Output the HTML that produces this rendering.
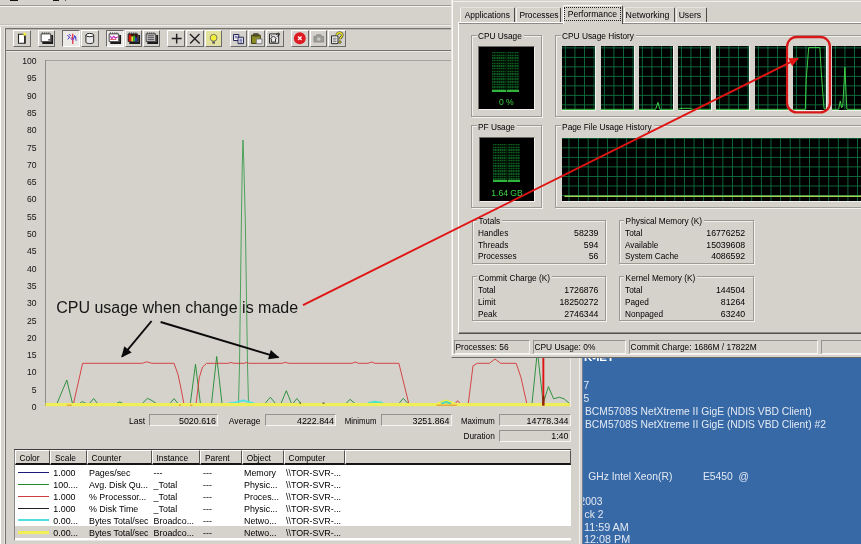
<!DOCTYPE html>
<html><head><meta charset="utf-8"><title>Performance</title>
<style>
html,body{margin:0;padding:0;background:#d5d2cc;}
#root{filter:blur(0.35px);position:relative;width:861px;height:544px;overflow:hidden;background:#d5d2cc;font-family:"Liberation Sans",sans-serif;}
#root div,#root span,#root svg{position:absolute;box-sizing:border-box;}
.t{white-space:pre;}
.btn{border-top:1px solid #fff;border-left:1px solid #fff;border-right:1px solid #6a6a6a;border-bottom:1px solid #6a6a6a;background:#d5d2cc;}
.btnp{border-top:1px solid #6a6a6a;border-left:1px solid #6a6a6a;border-right:1px solid #fff;border-bottom:1px solid #fff;background:#eceae6;}
.sunk{border-top:1px solid #94928c;border-left:1px solid #94928c;border-right:1px solid #f6f5f2;border-bottom:1px solid #f6f5f2;}
.grp{border:1px solid #9c9a94;box-shadow:1px 1px 0 #f4f3f0, inset 1px 1px 0 #f0efeb;}
.hdr{border-top:1px solid #fff;border-left:1px solid #fff;border-right:1px solid #55534f;border-bottom:2px solid #141414;background:#d5d2cc;}
</style></head>
<body><div id="root">
<!-- ===== Performance Monitor window ===== -->
<div style="left:9.8px;top:0px;width:7.8px;height:1.0px;background:#111"></div>
<div style="left:53px;top:0px;width:5.6px;height:1.0px;background:#151515"></div>
<div style="left:64.6px;top:0px;width:1.0px;height:0.9px;background:#555"></div>
<div style="left:0px;top:4.6px;width:452px;height:1px;background:#9c9a94"></div>
<div style="left:0px;top:5.6px;width:452px;height:1px;background:#f4f3f0"></div>
<div style="left:0px;top:24px;width:452px;height:1px;background:#c2bfb8"></div>
<div style="left:0px;top:25px;width:452px;height:1px;background:#efeeea"></div>
<div style="left:0px;top:27px;width:1px;height:517px;background:#fff"></div>
<div style="left:3.5px;top:28px;width:1.3px;height:516px;background:#e6e4de"></div>
<div style="left:5px;top:28px;width:1px;height:516px;background:#74726e"></div>
<div style="left:5px;top:28px;width:447px;height:1px;background:#74726e"></div>
<div style="left:6px;top:29px;width:446px;height:1px;background:#b9b6ae"></div>
<div style="left:6px;top:49.6px;width:446px;height:1px;background:#74726e"></div>
<div style="left:6px;top:50.6px;width:446px;height:1px;background:#e9e7e2"></div>
<div class="btn" style="left:13.2px;top:30.2px;width:17.6px;height:16.6px"><svg viewBox="0 0 16 15" style="left:0;top:0;width:15.6px;height:14.6px"><path d="M4.6 3.4h5.2l1.4 1.2v8H4.6z" fill="#fff" stroke="#222" stroke-width="1.1"/><path d="M11.2 4.4v8.4" stroke="#222" stroke-width="1.5"/><path d="M10.6 0.8l0.8 1.6 1.8-0.4-1.2 1.4 1 1.6-1.8-0.6-1.2 1.2 0-1.8-1.6-0.8 1.8-0.4z" fill="#f6f03a"/></svg></div>
<div class="btn" style="left:37.6px;top:30.2px;width:17.6px;height:16.6px"><svg viewBox="0 0 16 15" style="left:0;top:0;width:15.6px;height:14.6px"><path d="M3.4 12.3H13.5V4.2" fill="none" stroke="#1a1a1a" stroke-width="1.9"/><path d="M2.2 3h9.8v7.9H2.2z" fill="#fff" stroke="#2a2a2a" stroke-width="0.9"/><path d="M3 2.1h8.6" stroke="#222" stroke-width="1" stroke-dasharray="1.1 1.1"/><rect x="9.6" y="8.4" width="1.6" height="1.4" fill="#222"/></svg></div>
<div class="btnp" style="left:62px;top:30.2px;width:17.6px;height:16.6px"><svg viewBox="0 0 16 15" style="left:0;top:0;width:15.6px;height:14.6px"><path d="M4.4 4.4l2.4 1.8-1.8 2.4M6.4 3.2l1.6 2" stroke="#4a2ac8" stroke-width="1" fill="none"/><path d="M10 2.8v10.6" stroke="#e02030" stroke-width="1.2"/><path d="M7.8 7.6l2.2 1.8 2.2-4.4 1.4 5M11.4 4.6l2.4 2.4" stroke="#3a3ad0" stroke-width="1" fill="none"/><path d="M8.4 6l1.6 4" stroke="#d040a0" stroke-width="0.8"/></svg></div>
<div class="btn" style="left:81px;top:30.2px;width:17.6px;height:16.6px"><svg viewBox="0 0 16 15" style="left:0;top:0;width:15.6px;height:14.6px"><path d="M4 4.2v7.2c0 2 8 2 8 0V4.2" fill="#e8e8e8" stroke="#222" stroke-width="1"/><ellipse cx="8" cy="4.2" rx="4" ry="1.7" fill="#fff" stroke="#222" stroke-width="1"/></svg></div>
<div class="btnp" style="left:106.3px;top:30.2px;width:17.6px;height:16.6px"><svg viewBox="0 0 16 15" style="left:0;top:0;width:15.6px;height:14.6px"><path d="M3.4 12.3H13.5V4.2" fill="none" stroke="#1a1a1a" stroke-width="1.9"/><path d="M2.2 3h9.8v7.9H2.2z" fill="#fff" stroke="#2a2a2a" stroke-width="0.9"/><path d="M3 2.1h8.6" stroke="#222" stroke-width="1" stroke-dasharray="1.1 1.1"/><path d="M3.2 5.2l1.8 2.6 1.8-2.4 2 1.8 2.2-1.2" stroke="#c020c0" stroke-width="1.1" fill="none"/><path d="M3.2 8.6h6.4" stroke="#d02020" stroke-width="0.8"/></svg></div>
<div class="btn" style="left:124.5px;top:30.2px;width:17.6px;height:16.6px"><svg viewBox="0 0 16 15" style="left:0;top:0;width:15.6px;height:14.6px"><path d="M3.4 12.3H13.5V4.2" fill="none" stroke="#1a1a1a" stroke-width="1.9"/><path d="M2.2 3h9.8v7.9H2.2z" fill="#3a0808" stroke="#2a2a2a" stroke-width="0.9"/><path d="M3 2.1h8.6" stroke="#222" stroke-width="1" stroke-dasharray="1.1 1.1"/><rect x="2.8" y="3.8" width="2.6" height="6.8" fill="#d01818"/><rect x="5.4" y="5.6" width="2" height="5" fill="#e8e030"/><rect x="7.4" y="4.6" width="2" height="6" fill="#30b030"/><rect x="9.4" y="6.6" width="1.8" height="4" fill="#2040d0"/></svg></div>
<div class="btn" style="left:142.7px;top:30.2px;width:17.6px;height:16.6px"><svg viewBox="0 0 16 15" style="left:0;top:0;width:15.6px;height:14.6px"><path d="M3.4 12.3H13.5V4.2" fill="none" stroke="#1a1a1a" stroke-width="1.9"/><path d="M2.2 3h9.8v7.9H2.2z" fill="#dcdcdc" stroke="#2a2a2a" stroke-width="0.9"/><path d="M3 2.1h8.6" stroke="#222" stroke-width="1" stroke-dasharray="1.1 1.1"/><path d="M3.6 5h7M3.6 7h7M3.6 9h7" stroke="#333" stroke-width="1"/></svg></div>
<div class="btn" style="left:167px;top:30.2px;width:17.6px;height:16.6px"><svg viewBox="0 0 16 15" style="left:0;top:0;width:15.6px;height:14.6px"><path d="M8.9 2.8v10M3.8 7.8h10.2" stroke="#222" stroke-width="1.5"/></svg></div>
<div class="btn" style="left:186px;top:30.2px;width:17.6px;height:16.6px"><svg viewBox="0 0 16 15" style="left:0;top:0;width:15.6px;height:14.6px"><path d="M3 3l10 9.8M12.8 3L3.2 12.8" stroke="#222" stroke-width="1.4"/></svg></div>
<div class="btn" style="left:204.5px;top:30.2px;width:17.6px;height:16.6px"><svg viewBox="0 0 16 15" style="left:0;top:0;width:15.6px;height:14.6px"><rect x="0" y="0" width="16" height="15" fill="#e4e29c"/><circle cx="7.8" cy="7" r="3.5" fill="#f4f03a" stroke="#666" stroke-width="0.9"/><path d="M6.5 10.6h2.6v2.4H6.5z" fill="#555"/></svg></div>
<div class="btn" style="left:229.5px;top:30.2px;width:17.6px;height:16.6px"><svg viewBox="0 0 16 15" style="left:0;top:0;width:15.6px;height:14.6px"><path d="M2.6 3.6h5.4v6.2H2.6z" fill="#fff" stroke="#1e1e50" stroke-width="1"/><path d="M7.2 6.4h5.6v6.6H7.2z" fill="#fff" stroke="#1e1e50" stroke-width="1"/><path d="M3.8 5.4h3M3.8 7h3M8.6 8.4h3M8.6 10h3M8.6 11.4h3" stroke="#30307a" stroke-width="0.8"/></svg></div>
<div class="btn" style="left:247.8px;top:30.2px;width:17.6px;height:16.6px"><svg viewBox="0 0 16 15" style="left:0;top:0;width:15.6px;height:14.6px"><path d="M2.6 4.2h9v8.6h-9z" fill="#8c8c24" stroke="#3c3c12" stroke-width="1"/><rect x="4.8" y="2.8" width="4.6" height="2.4" fill="#55551a" stroke="#333" stroke-width="0.7"/><path d="M7.6 8.2h5.8v5H7.6z" fill="#ececec" stroke="#777" stroke-width="0.9"/></svg></div>
<div class="btn" style="left:266px;top:30.2px;width:17.6px;height:16.6px"><svg viewBox="0 0 16 15" style="left:0;top:0;width:15.6px;height:14.6px"><path d="M2.6 3h9.4v9.6H2.6z" fill="#e8e8e8" stroke="#222" stroke-width="1"/><path d="M3.6 8l3-3 3 3M4.4 8v3.4h4.4V8M4 5h1M9 4l3-2 1 1.6-3 2.2" stroke="#222" stroke-width="1" fill="none"/></svg></div>
<div class="btn" style="left:291px;top:30.2px;width:17.6px;height:16.6px"><svg viewBox="0 0 16 15" style="left:0;top:0;width:15.6px;height:14.6px"><circle cx="8" cy="7.5" r="6.1" fill="#de1a22"/><path d="M6.2 5.6l3.6 3.6M9.8 5.6L6.2 9.2" stroke="#fff" stroke-width="1.3"/></svg></div>
<div class="btn" style="left:309.5px;top:30.2px;width:17.6px;height:16.6px"><svg viewBox="0 0 16 15" style="left:0;top:0;width:15.6px;height:14.6px"><path d="M3 5.4h2l1-1.6h4l1 1.6h2v6H3z" fill="#9a9a96" stroke="#8a8884" stroke-width="0.8"/><circle cx="8" cy="8.2" r="1.9" fill="#c8c6c0"/></svg></div>
<div class="btn" style="left:328px;top:30.2px;width:17.6px;height:16.6px"><svg viewBox="0 0 16 15" style="left:0;top:0;width:15.6px;height:14.6px"><path d="M2.6 5h6.6v8H2.6z" fill="#fff" stroke="#222" stroke-width="1"/><path d="M3.8 7.4h4M3.8 9.2h4M3.8 11h4" stroke="#444" stroke-width="0.8"/><path d="M8 4.4c0-3.4 5.6-3.4 5.6 0 0 2-2.4 2-2.4 4.2" fill="none" stroke="#222" stroke-width="2.6"/><path d="M8 4.4c0-3.4 5.6-3.4 5.6 0 0 2-2.4 2-2.4 4.2" fill="none" stroke="#f0ea30" stroke-width="1.4"/><circle cx="11.2" cy="11.4" r="1.3" fill="#f0ea30" stroke="#222" stroke-width="0.7"/></svg></div>
<span class="t" style="top:55px;font-size:8.6px;line-height:12px;color:#111;right:824.4px;">100</span>
<span class="t" style="top:72px;font-size:8.6px;line-height:12px;color:#111;right:824.4px;">95</span>
<span class="t" style="top:90px;font-size:8.6px;line-height:12px;color:#111;right:824.4px;">90</span>
<span class="t" style="top:107px;font-size:8.6px;line-height:12px;color:#111;right:824.4px;">85</span>
<span class="t" style="top:124px;font-size:8.6px;line-height:12px;color:#111;right:824.4px;">80</span>
<span class="t" style="top:142px;font-size:8.6px;line-height:12px;color:#111;right:824.4px;">75</span>
<span class="t" style="top:159px;font-size:8.6px;line-height:12px;color:#111;right:824.4px;">70</span>
<span class="t" style="top:176px;font-size:8.6px;line-height:12px;color:#111;right:824.4px;">65</span>
<span class="t" style="top:193px;font-size:8.6px;line-height:12px;color:#111;right:824.4px;">60</span>
<span class="t" style="top:211px;font-size:8.6px;line-height:12px;color:#111;right:824.4px;">55</span>
<span class="t" style="top:228px;font-size:8.6px;line-height:12px;color:#111;right:824.4px;">50</span>
<span class="t" style="top:245px;font-size:8.6px;line-height:12px;color:#111;right:824.4px;">45</span>
<span class="t" style="top:263px;font-size:8.6px;line-height:12px;color:#111;right:824.4px;">40</span>
<span class="t" style="top:280px;font-size:8.6px;line-height:12px;color:#111;right:824.4px;">35</span>
<span class="t" style="top:297px;font-size:8.6px;line-height:12px;color:#111;right:824.4px;">30</span>
<span class="t" style="top:315px;font-size:8.6px;line-height:12px;color:#111;right:824.4px;">25</span>
<span class="t" style="top:332px;font-size:8.6px;line-height:12px;color:#111;right:824.4px;">20</span>
<span class="t" style="top:349px;font-size:8.6px;line-height:12px;color:#111;right:824.4px;">15</span>
<span class="t" style="top:366px;font-size:8.6px;line-height:12px;color:#111;right:824.4px;">10</span>
<span class="t" style="top:384px;font-size:8.6px;line-height:12px;color:#111;right:824.4px;">5</span>
<span class="t" style="top:401px;font-size:8.6px;line-height:12px;color:#111;right:824.4px;">0</span>
<div style="left:45px;top:60px;width:525px;height:1px;background:#a4a29c"></div>
<div style="left:45px;top:60px;width:1px;height:346px;background:#8e8c86"></div>
<div style="left:570px;top:60px;width:1px;height:347px;background:#ecebe7"></div>
<svg width="861" height="544" viewBox="0 0 861 544" style="left:0;top:0"><polyline points="57,403.5 66.8,380 72.5,403.5 79.5,403.5 82.6,401.6 86,403.5 89.5,403.5 93.7,398.5 97.5,403.5 116.5,403.5 119.7,402 123,403.5 142.4,403.5 147.3,398.3 151,400 156.3,403.5 170,403.5 174,398.6 178,403.5 190.3,403.5 195.5,364.3 200.4,403.5 211.5,403.5 216.7,356.5 222,403.5 265,403.5 270.3,397.2 275.5,403.5 281,403.5 286.3,390.7 291.5,403.5 293,403.5 296.8,398.5 301,403.5 346,403.5 350,399.3 355,403.5 399,403.5 403.3,398.3 408,403.5 532,403.5 537.4,351 543.2,403.5 548.4,386.6 553.6,398.8 559.3,397.2 564,398.8 569.5,403.5" fill="none" stroke="#1f8a30" stroke-width="0.9" stroke-linejoin="round" /><polyline points="238.5,403.5 239.5,365 241.4,220 242.3,163 243,140 243.8,163 245.3,220 247.5,365 248.5,403.5" fill="none" stroke="#2c9440" stroke-width="0.8" stroke-linejoin="round" /><polyline points="45.5,404.5 73.3,404.5 82.6,363.3 142.4,363.3 146.5,361.8 152,363.3 174,363.3 178,374.4 181.4,390.6 184,404.5 196,404.5 199.3,377.6 202.5,367 206.6,363.3 228,363.3 231,362.5 234,363.3 244,363.3 246.4,362.5 249,363.3 282,363.3 285.4,362.3 289,363.3 352,363.3 355.3,362 358.5,363.3 368,363.3 371.5,362 375,363.3 398.9,363.3 409,404.5 454.4,404.5 457.6,400.7 461,404.5 468.2,404.5 473,365.8 477.2,363.3 489.3,363.3 495,359 500.7,363.3 516.2,363.3 521,377.6 527,404.5 569.5,404.5" fill="none" stroke="#d43434" stroke-width="0.9" stroke-linejoin="round" /><polyline points="228.5,403.5 236,402.3 243,400.4 250,402.3 254.5,403.5" fill="none" stroke="#4fe3df" stroke-width="1.8" stroke-linejoin="round" /><polyline points="368.3,403 375,401.8 383,403" fill="none" stroke="#52e0c8" stroke-width="2" stroke-linejoin="round" /><polyline points="440,403 446.3,401 452,403" fill="none" stroke="#52d8c0" stroke-width="2.4" stroke-linejoin="round" /><rect x="45.5" y="403" width="524.3" height="3.2" fill="#efee58"/><polyline points="437,403.5 446.3,400.2 455,403.5" fill="none" stroke="#f1ef4c" stroke-width="1.6" stroke-linejoin="round" /><polyline points="441,403.6 446.3,402 451,403.6" fill="none" stroke="#58d6b8" stroke-width="2" stroke-linejoin="round" /><rect x="66.8" y="404.6" width="4.900000000000006" height="1.2" fill="#e89a38"/><rect x="436.6" y="404.6" width="20.19999999999999" height="1.2" fill="#e89a38"/><rect x="179" y="404.6" width="2" height="1.2" fill="#e89a38"/><rect x="190" y="404.6" width="2.4000000000000057" height="1.2" fill="#e89a38"/><rect x="322.5" y="402.6" width="2" height="1" fill="#333"/><rect x="299.5" y="402.6" width="1.5" height="1" fill="#333"/><rect x="542.4" y="340" width="1.9" height="65.5" fill="#dc1414"/><rect x="542.2" y="396" width="2.2" height="9.5" fill="#8c2808"/></svg>
<span class="t" style="top:415px;font-size:8.5px;line-height:12px;color:#000;right:716px;">Last</span>
<div class="sunk" style="left:149px;top:414.1px;width:69px;height:12.100000000000012px;"></div>
<span class="t" style="top:415px;font-size:8.9px;line-height:12px;color:#000;right:645.0px;">5020.616</span>
<span class="t" style="top:415px;font-size:8.55px;line-height:12px;color:#000;right:600.5px;">Average</span>
<div class="sunk" style="left:265px;top:414.1px;width:71px;height:12.100000000000012px;"></div>
<span class="t" style="top:415px;font-size:8.9px;line-height:12px;color:#000;right:527.0px;">4222.844</span>
<span class="t" style="top:415px;font-size:8.5px;line-height:12px;color:#000;transform:scaleX(0.92);transform-origin:100% 50%;right:485px;">Minimum</span>
<div class="sunk" style="left:380.5px;top:414.1px;width:71.0px;height:12.100000000000012px;"></div>
<span class="t" style="top:415px;font-size:8.9px;line-height:12px;color:#000;right:411.5px;">3251.864</span>
<span class="t" style="top:415px;font-size:8.5px;line-height:12px;color:#000;transform:scaleX(0.92);transform-origin:100% 50%;right:366.2px;">Maximum</span>
<div class="sunk" style="left:499px;top:414.1px;width:71.5px;height:12.100000000000012px;"></div>
<span class="t" style="top:415px;font-size:8.9px;line-height:12px;color:#000;right:292.5px;">14778.344</span>
<span class="t" style="top:430px;font-size:8.3px;line-height:12px;color:#000;right:366.2px;">Duration</span>
<div class="sunk" style="left:499px;top:429.6px;width:71.5px;height:12.100000000000012px;"></div>
<span class="t" style="top:430px;font-size:8.9px;line-height:12px;color:#000;right:292.5px;">1:40</span>
<div style="left:14px;top:449px;width:557px;height:92px;background:#fff;border-left:1px solid #8a8882;border-bottom:1px solid #e8e6e1"></div>
<div style="left:14px;top:448.8px;width:557.2px;height:1.3px;background:#403e3c"></div>
<div class="hdr" style="left:14.5px;top:449.8px;width:35.5px;height:15px;"></div>
<span class="t" style="top:452px;font-size:8.4px;line-height:12px;color:#000;left:19.5px;">Color</span>
<div class="hdr" style="left:50px;top:449.8px;width:36.5px;height:15px;"></div>
<span class="t" style="top:452px;font-size:8.4px;line-height:12px;color:#000;left:55px;">Scale</span>
<div class="hdr" style="left:86.5px;top:449.8px;width:65.0px;height:15px;"></div>
<span class="t" style="top:452px;font-size:8.4px;line-height:12px;color:#000;left:91.5px;">Counter</span>
<div class="hdr" style="left:151.5px;top:449.8px;width:48.5px;height:15px;"></div>
<span class="t" style="top:452px;font-size:8.4px;line-height:12px;color:#000;left:156.5px;">Instance</span>
<div class="hdr" style="left:200px;top:449.8px;width:41.69999999999999px;height:15px;"></div>
<span class="t" style="top:452px;font-size:8.4px;line-height:12px;color:#000;left:205px;">Parent</span>
<div class="hdr" style="left:241.7px;top:449.8px;width:41.900000000000034px;height:15px;"></div>
<span class="t" style="top:452px;font-size:8.4px;line-height:12px;color:#000;left:246.7px;">Object</span>
<div class="hdr" style="left:283.6px;top:449.8px;width:61.0px;height:15px;"></div>
<span class="t" style="top:452px;font-size:8.4px;line-height:12px;color:#000;left:288.6px;">Computer</span>
<div class="hdr" style="left:344.6px;top:449.8px;width:226.19999999999993px;height:15px;"></div>
<div style="left:15px;top:526.2px;width:555.5px;height:12px;background:#d6d3cd"></div>
<div style="left:18.2px;top:472.09999999999997px;width:31.3px;height:0.9px;background:#1c1c78"></div>
<span class="t" style="top:467px;font-size:8.9px;line-height:12px;color:#000;left:53.3px;">1.000</span>
<span class="t" style="top:467px;font-size:8.9px;line-height:12px;color:#000;left:89px;">Pages/sec</span>
<span class="t" style="top:467px;font-size:8.9px;line-height:12px;color:#000;left:153.6px;">---</span>
<span class="t" style="top:467px;font-size:8.9px;line-height:12px;color:#000;left:203px;">---</span>
<span class="t" style="top:467px;font-size:8.9px;line-height:12px;color:#000;left:244px;">Memory</span>
<span class="t" style="top:467px;font-size:8.9px;line-height:12px;color:#000;left:286px;">\\TOR-SVR-...</span>
<div style="left:18.2px;top:484.02px;width:31.3px;height:0.9px;background:#23892f"></div>
<span class="t" style="top:479px;font-size:8.9px;line-height:12px;color:#000;left:53.3px;">100....</span>
<span class="t" style="top:479px;font-size:8.9px;line-height:12px;color:#000;left:89px;">Avg. Disk Qu...</span>
<span class="t" style="top:479px;font-size:8.9px;line-height:12px;color:#000;left:153.6px;">_Total</span>
<span class="t" style="top:479px;font-size:8.9px;line-height:12px;color:#000;left:203px;">---</span>
<span class="t" style="top:479px;font-size:8.9px;line-height:12px;color:#000;left:244px;">Physic...</span>
<span class="t" style="top:479px;font-size:8.9px;line-height:12px;color:#000;left:286px;">\\TOR-SVR-...</span>
<div style="left:18.2px;top:495.93999999999994px;width:31.3px;height:0.9px;background:#cf3d3d"></div>
<span class="t" style="top:491px;font-size:8.9px;line-height:12px;color:#000;left:53.3px;">1.000</span>
<span class="t" style="top:491px;font-size:8.9px;line-height:12px;color:#000;left:89px;">% Processor...</span>
<span class="t" style="top:491px;font-size:8.9px;line-height:12px;color:#000;left:153.6px;">_Total</span>
<span class="t" style="top:491px;font-size:8.9px;line-height:12px;color:#000;left:203px;">---</span>
<span class="t" style="top:491px;font-size:8.9px;line-height:12px;color:#000;left:244px;">Proces...</span>
<span class="t" style="top:491px;font-size:8.9px;line-height:12px;color:#000;left:286px;">\\TOR-SVR-...</span>
<div style="left:18.2px;top:507.85999999999996px;width:31.3px;height:0.9px;background:#222"></div>
<span class="t" style="top:503px;font-size:8.9px;line-height:12px;color:#000;left:53.3px;">1.000</span>
<span class="t" style="top:503px;font-size:8.9px;line-height:12px;color:#000;left:89px;">% Disk Time</span>
<span class="t" style="top:503px;font-size:8.9px;line-height:12px;color:#000;left:153.6px;">_Total</span>
<span class="t" style="top:503px;font-size:8.9px;line-height:12px;color:#000;left:203px;">---</span>
<span class="t" style="top:503px;font-size:8.9px;line-height:12px;color:#000;left:244px;">Physic...</span>
<span class="t" style="top:503px;font-size:8.9px;line-height:12px;color:#000;left:286px;">\\TOR-SVR-...</span>
<div style="left:18.2px;top:519.0799999999999px;width:31.3px;height:2.4px;background:#4fdfe0"></div>
<span class="t" style="top:515px;font-size:8.9px;line-height:12px;color:#000;left:53.3px;">0.00...</span>
<span class="t" style="top:515px;font-size:8.9px;line-height:12px;color:#000;left:89px;">Bytes Total/sec</span>
<span class="t" style="top:515px;font-size:8.9px;line-height:12px;color:#000;left:153.6px;">Broadco...</span>
<span class="t" style="top:515px;font-size:8.9px;line-height:12px;color:#000;left:203px;">---</span>
<span class="t" style="top:515px;font-size:8.9px;line-height:12px;color:#000;left:244px;">Netwo...</span>
<span class="t" style="top:515px;font-size:8.9px;line-height:12px;color:#000;left:286px;">\\TOR-SVR-...</span>
<div style="left:18.2px;top:530.7px;width:31.3px;height:3px;background:#f1ef55"></div>
<span class="t" style="top:527px;font-size:8.9px;line-height:12px;color:#000;left:53.3px;">0.00...</span>
<span class="t" style="top:527px;font-size:8.9px;line-height:12px;color:#000;left:89px;">Bytes Total/sec</span>
<span class="t" style="top:527px;font-size:8.9px;line-height:12px;color:#000;left:153.6px;">Broadco...</span>
<span class="t" style="top:527px;font-size:8.9px;line-height:12px;color:#000;left:203px;">---</span>
<span class="t" style="top:527px;font-size:8.9px;line-height:12px;color:#000;left:244px;">Netwo...</span>
<span class="t" style="top:527px;font-size:8.9px;line-height:12px;color:#000;left:286px;">\\TOR-SVR-...</span>
<div style="left:578.8px;top:356px;width:1.2px;height:188px;background:#f1f0ec"></div>
<div style="left:581.6px;top:356px;width:1px;height:188px;background:#6f7f98"></div>
<!-- ===== Desktop (BgInfo) ===== -->
<div style="left:582.5px;top:356px;width:279px;height:188px;background:#3869a7;overflow:hidden">
<span class="t" style="left:1.5px;top:-6px;font-size:11.5px;line-height:14px;color:#fff;font-weight:bold;">K-IET</span>
<span class="t" style="left:1.1px;top:23px;font-size:10.3px;line-height:13px;color:#e3eaf3;">7</span>
<span class="t" style="left:1.1px;top:36px;font-size:10.3px;line-height:13px;color:#e3eaf3;">5</span>
<span class="t" style="left:2.5px;top:49px;font-size:10.3px;line-height:13px;color:#e3eaf3;">BCM5708S NetXtreme II GigE (NDIS VBD Client)</span>
<span class="t" style="left:2.5px;top:62px;font-size:10.3px;line-height:13px;color:#e3eaf3;">BCM5708S NetXtreme II GigE (NDIS VBD Client) #2</span>
<span class="t" style="left:-1.9px;top:114px;font-size:10.3px;line-height:13px;color:#e3eaf3;">l</span>
<span class="t" style="left:5.7px;top:114px;font-size:10.3px;line-height:13px;color:#e3eaf3;">GHz Intel Xeon(R)</span>
<span class="t" style="left:120.4px;top:114px;font-size:10.3px;line-height:13px;color:#e3eaf3;">E5450  @</span>
<span class="t" style="left:-2.9px;top:139px;font-size:10.3px;line-height:13px;color:#e3eaf3;">2003</span>
<span class="t" style="left:2.1px;top:152px;font-size:10.3px;line-height:13px;color:#e3eaf3;">ck 2</span>
<span class="t" style="left:1.5px;top:164px;font-size:10.8px;line-height:14px;color:#e3eaf3;">11:59 AM</span>
<span class="t" style="left:1.5px;top:176px;font-size:10.8px;line-height:14px;color:#e3eaf3;">12:08 PM</span>
</div>
<!-- ===== Task Manager window ===== -->
<div style="left:451px;top:0px;width:410px;height:357.5px;background:#d5d2cc;border-left:1px solid #e6e4de;border-bottom:1.7px solid #6a6864"></div>
<div style="left:451.8px;top:0px;width:1.2px;height:355.4px;background:#fbfaf8"></div>
<div style="left:453px;top:354.4px;width:408px;height:1px;background:#f1f0ec"></div>
<div style="left:453px;top:1.2px;width:408px;height:1px;background:#efeeea"></div>
<div style="left:458px;top:22px;width:420px;height:312.4px;border-left:1px solid #fff;border-top:1px solid #fff;border-bottom:1px solid #55534f;box-shadow:0 1px 0 #8d8b86 inset"></div>
<div style="left:459px;top:332.4px;width:402px;height:1px;background:#8d8b86"></div>
<div style="left:460.3px;top:7.2px;width:54.30000000000001px;height:15px;background:#d5d2cc;border-left:1px solid #f3f2ef;border-top:1px solid #e6e4df;border-right:1px solid #4c4a46;border-radius:2px 2px 0 0"></div>
<span class="t" style="top:9px;font-size:8.4px;line-height:12px;color:#000;left:387.25000000000006px;width:200px;text-align:center;">Applications</span>
<div style="left:516px;top:7.2px;width:45.39999999999998px;height:15px;background:#d5d2cc;border-left:1px solid #f3f2ef;border-top:1px solid #e6e4df;border-right:1px solid #4c4a46;border-radius:2px 2px 0 0"></div>
<span class="t" style="top:9px;font-size:8.4px;line-height:12px;color:#000;left:439.0px;width:200px;text-align:center;">Processes</span>
<div style="left:562.6px;top:4.8px;width:60.39999999999998px;height:19px;background:#d5d2cc;border-left:1px solid #fff;border-top:1px solid #fbfaf8;border-right:1px solid #4c4a46;border-radius:2px 2px 0 0"></div>
<div style="left:564.4px;top:7.4px;width:56.59999999999998px;height:13.8px;border:1px dotted #222"></div>
<span class="t" style="top:8px;font-size:8.65px;line-height:12px;color:#000;left:492.4px;width:200px;text-align:center;">Performance</span>
<div style="left:624px;top:7.2px;width:50.60000000000002px;height:15px;background:#d5d2cc;border-left:1px solid #f3f2ef;border-top:1px solid #e6e4df;border-right:1px solid #4c4a46;border-radius:2px 2px 0 0"></div>
<span class="t" style="top:9px;font-size:8.75px;line-height:12px;color:#000;left:547.4999999999999px;width:200px;text-align:center;">Networking</span>
<div style="left:676px;top:7.2px;width:31.399999999999977px;height:15px;background:#d5d2cc;border-left:1px solid #f3f2ef;border-top:1px solid #e6e4df;border-right:1px solid #4c4a46;border-radius:2px 2px 0 0"></div>
<span class="t" style="top:9px;font-size:8.6px;line-height:12px;color:#000;left:589.9px;width:200px;text-align:center;">Users</span>
<div class="grp" style="left:470.9px;top:34.5px;width:71.10000000000002px;height:82.2px;"></div>
<span class="t" style="top:30px;font-size:8.3px;line-height:12px;color:#000;background:#d5d2cc;padding:0 2px 0 1.5px;left:476.5px;">CPU Usage</span>
<div class="grp" style="left:555px;top:34.5px;width:325px;height:82.2px;"></div>
<span class="t" style="top:30px;font-size:8.3px;line-height:12px;color:#000;background:#d5d2cc;padding:0 2px 0 1.5px;left:560.6px;">CPU Usage History</span>
<div class="grp" style="left:470.9px;top:125.1px;width:71.10000000000002px;height:82.6px;"></div>
<span class="t" style="top:121px;font-size:8.3px;line-height:12px;color:#000;background:#d5d2cc;padding:0 2px 0 1.5px;left:476.5px;">PF Usage</span>
<div class="grp" style="left:555px;top:125.1px;width:325px;height:82.6px;"></div>
<span class="t" style="top:121px;font-size:8.3px;line-height:12px;color:#000;background:#d5d2cc;padding:0 2px 0 1.5px;left:560.6px;">Page File Usage History</span>
<div class="grp" style="left:471.5px;top:219.7px;width:134.5px;height:43.900000000000034px;"></div>
<span class="t" style="top:215px;font-size:8.3px;line-height:12px;color:#000;background:#d5d2cc;padding:0 2px 0 1.5px;left:477.1px;">Totals</span>
<div class="grp" style="left:618.5px;top:219.7px;width:135.0px;height:43.900000000000034px;"></div>
<span class="t" style="top:215px;font-size:8.3px;line-height:12px;color:#000;background:#d5d2cc;padding:0 2px 0 1.5px;left:624.1px;">Physical Memory (K)</span>
<div class="grp" style="left:471.5px;top:276.4px;width:134.5px;height:44.200000000000045px;"></div>
<span class="t" style="top:272px;font-size:8.3px;line-height:12px;color:#000;background:#d5d2cc;padding:0 2px 0 1.5px;left:477.1px;">Commit Charge (K)</span>
<div class="grp" style="left:618.5px;top:276.4px;width:135.0px;height:44.200000000000045px;"></div>
<span class="t" style="top:272px;font-size:8.3px;line-height:12px;color:#000;background:#d5d2cc;padding:0 2px 0 1.5px;left:624.1px;">Kernel Memory (K)</span>
<span class="t" style="top:228px;font-size:8.25px;line-height:11px;color:#000;left:478px;">Handles</span>
<span class="t" style="top:227px;font-size:8.75px;line-height:12px;color:#000;right:262.6px;">58239</span>
<span class="t" style="top:240px;font-size:8.25px;line-height:11px;color:#000;left:478px;">Threads</span>
<span class="t" style="top:239px;font-size:8.75px;line-height:12px;color:#000;right:262.6px;">594</span>
<span class="t" style="top:251px;font-size:8.25px;line-height:11px;color:#000;left:478px;">Processes</span>
<span class="t" style="top:250px;font-size:8.75px;line-height:12px;color:#000;right:262.6px;">56</span>
<span class="t" style="top:228px;font-size:8.25px;line-height:11px;color:#000;left:625px;">Total</span>
<span class="t" style="top:227px;font-size:8.75px;line-height:12px;color:#000;right:115.79999999999995px;">16776252</span>
<span class="t" style="top:240px;font-size:8.25px;line-height:11px;color:#000;left:625px;">Available</span>
<span class="t" style="top:239px;font-size:8.75px;line-height:12px;color:#000;right:115.79999999999995px;">15039608</span>
<span class="t" style="top:251px;font-size:8.25px;line-height:11px;color:#000;left:625px;">System Cache</span>
<span class="t" style="top:250px;font-size:8.75px;line-height:12px;color:#000;right:115.79999999999995px;">4086592</span>
<span class="t" style="top:285px;font-size:8.25px;line-height:11px;color:#000;left:478px;">Total</span>
<span class="t" style="top:284px;font-size:8.75px;line-height:12px;color:#000;right:262.6px;">1726876</span>
<span class="t" style="top:297px;font-size:8.25px;line-height:11px;color:#000;left:478px;">Limit</span>
<span class="t" style="top:296px;font-size:8.75px;line-height:12px;color:#000;right:262.6px;">18250272</span>
<span class="t" style="top:309px;font-size:8.25px;line-height:11px;color:#000;left:478px;">Peak</span>
<span class="t" style="top:308px;font-size:8.75px;line-height:12px;color:#000;right:262.6px;">2746344</span>
<span class="t" style="top:285px;font-size:8.25px;line-height:11px;color:#000;left:625px;">Total</span>
<span class="t" style="top:284px;font-size:8.75px;line-height:12px;color:#000;right:115.79999999999995px;">144504</span>
<span class="t" style="top:297px;font-size:8.25px;line-height:11px;color:#000;left:625px;">Paged</span>
<span class="t" style="top:296px;font-size:8.75px;line-height:12px;color:#000;right:115.79999999999995px;">81264</span>
<span class="t" style="top:309px;font-size:8.25px;line-height:11px;color:#000;left:625px;">Nonpaged</span>
<span class="t" style="top:308px;font-size:8.75px;line-height:12px;color:#000;right:115.79999999999995px;">63240</span>
<div style="left:478px;top:45.6px;width:56.60000000000002px;height:64.6px;background:#000;border-right:1px solid #f4f3f0;border-bottom:1px solid #f4f3f0;border-top:1px solid #6e6c68;border-left:1px solid #6e6c68"></div>
<div style="left:492.2px;top:52.0px;width:27.3px;height:39.7px;background:repeating-linear-gradient(to right,rgba(0,0,0,0) 0,rgba(0,0,0,0) 0.9px,rgba(0,0,0,0.4) 0.9px,rgba(0,0,0,0.4) 1.8px),repeating-linear-gradient(to bottom,#0d5a20 0,#0d5a20 1.5px,#021a07 1.5px,#021a07 2.65px)"></div>
<div style="left:505.95px;top:52.0px;width:0.7px;height:41.1px;background:#031c08"></div>
<div style="left:492.2px;top:90.4px;width:27.3px;height:1.3px;background:#31b43c"></div>
<div style="left:505.8px;top:90.4px;width:1px;height:1.3px;background:#0a3a10"></div>
<span class="t" style="top:96px;font-size:8.6px;line-height:12px;color:#3fd445;left:406.3px;width:200px;text-align:center;">0 %</span>
<div style="left:479px;top:137.4px;width:56px;height:64.19999999999999px;background:#000;border-right:1px solid #f4f3f0;border-bottom:1px solid #f4f3f0;border-top:1px solid #6e6c68;border-left:1px solid #6e6c68"></div>
<div style="left:492.9px;top:143.8px;width:27.3px;height:37.79999999999998px;background:repeating-linear-gradient(to right,rgba(0,0,0,0) 0,rgba(0,0,0,0) 0.9px,rgba(0,0,0,0.4) 0.9px,rgba(0,0,0,0.4) 1.8px),repeating-linear-gradient(to bottom,#0d5a20 0,#0d5a20 1.5px,#021a07 1.5px,#021a07 2.65px)"></div>
<div style="left:506.65px;top:143.8px;width:0.7px;height:39.19999999999998px;background:#031c08"></div>
<div style="left:492.9px;top:180.0px;width:27.3px;height:1.6px;background:#31b43c"></div>
<div style="left:506.5px;top:180.0px;width:1px;height:1.6px;background:#0a3a10"></div>
<span class="t" style="top:187px;font-size:8.6px;line-height:12px;color:#3fd445;left:407.0px;width:200px;text-align:center;">1.64 GB</span>
<div style="left:562.2px;top:46px;width:34.3px;height:65.4px;background:#000;border-right:1px solid #f1f0ec;border-bottom:1px solid #f1f0ec;overflow:hidden"><svg width="34.3" height="64.4" style="left:0;top:0"><rect x="2.90" y="0" width="0.9" height="64.4" fill="#0f7040"/><rect x="12.47" y="0" width="0.9" height="64.4" fill="#0f7040"/><rect x="22.04" y="0" width="0.9" height="64.4" fill="#0f7040"/><rect x="31.61" y="0" width="0.9" height="64.4" fill="#0f7040"/><rect x="0" y="1.40" width="34.3" height="0.9" fill="#0f7040"/><rect x="0" y="10.90" width="34.3" height="0.9" fill="#0f7040"/><rect x="0" y="20.40" width="34.3" height="0.9" fill="#0f7040"/><rect x="0" y="29.90" width="34.3" height="0.9" fill="#0f7040"/><rect x="0" y="39.40" width="34.3" height="0.9" fill="#0f7040"/><rect x="0" y="48.90" width="34.3" height="0.9" fill="#0f7040"/><rect x="0" y="58.40" width="34.3" height="0.9" fill="#0f7040"/><polyline points="0,63.3 34.3,63.3" fill="none" stroke="#40d84a" stroke-width="0.95"/></svg></div>
<div style="left:600.8px;top:46px;width:34.3px;height:65.4px;background:#000;border-right:1px solid #f1f0ec;border-bottom:1px solid #f1f0ec;overflow:hidden"><svg width="34.3" height="64.4" style="left:0;top:0"><rect x="2.90" y="0" width="0.9" height="64.4" fill="#0f7040"/><rect x="12.47" y="0" width="0.9" height="64.4" fill="#0f7040"/><rect x="22.04" y="0" width="0.9" height="64.4" fill="#0f7040"/><rect x="31.61" y="0" width="0.9" height="64.4" fill="#0f7040"/><rect x="0" y="1.40" width="34.3" height="0.9" fill="#0f7040"/><rect x="0" y="10.90" width="34.3" height="0.9" fill="#0f7040"/><rect x="0" y="20.40" width="34.3" height="0.9" fill="#0f7040"/><rect x="0" y="29.90" width="34.3" height="0.9" fill="#0f7040"/><rect x="0" y="39.40" width="34.3" height="0.9" fill="#0f7040"/><rect x="0" y="48.90" width="34.3" height="0.9" fill="#0f7040"/><rect x="0" y="58.40" width="34.3" height="0.9" fill="#0f7040"/><polyline points="0,63.3 34.3,63.3" fill="none" stroke="#40d84a" stroke-width="0.95"/></svg></div>
<div style="left:639.3px;top:46px;width:34.3px;height:65.4px;background:#000;border-right:1px solid #f1f0ec;border-bottom:1px solid #f1f0ec;overflow:hidden"><svg width="34.3" height="64.4" style="left:0;top:0"><rect x="2.90" y="0" width="0.9" height="64.4" fill="#0f7040"/><rect x="12.47" y="0" width="0.9" height="64.4" fill="#0f7040"/><rect x="22.04" y="0" width="0.9" height="64.4" fill="#0f7040"/><rect x="31.61" y="0" width="0.9" height="64.4" fill="#0f7040"/><rect x="0" y="1.40" width="34.3" height="0.9" fill="#0f7040"/><rect x="0" y="10.90" width="34.3" height="0.9" fill="#0f7040"/><rect x="0" y="20.40" width="34.3" height="0.9" fill="#0f7040"/><rect x="0" y="29.90" width="34.3" height="0.9" fill="#0f7040"/><rect x="0" y="39.40" width="34.3" height="0.9" fill="#0f7040"/><rect x="0" y="48.90" width="34.3" height="0.9" fill="#0f7040"/><rect x="0" y="58.40" width="34.3" height="0.9" fill="#0f7040"/><polyline points="0,63.3 16.6,63.3 19,56.4 20.8,63.3 34,63.3" fill="none" stroke="#40d84a" stroke-width="0.95"/></svg></div>
<div style="left:677.7px;top:46px;width:34.3px;height:65.4px;background:#000;border-right:1px solid #f1f0ec;border-bottom:1px solid #f1f0ec;overflow:hidden"><svg width="34.3" height="64.4" style="left:0;top:0"><rect x="2.90" y="0" width="0.9" height="64.4" fill="#0f7040"/><rect x="12.47" y="0" width="0.9" height="64.4" fill="#0f7040"/><rect x="22.04" y="0" width="0.9" height="64.4" fill="#0f7040"/><rect x="31.61" y="0" width="0.9" height="64.4" fill="#0f7040"/><rect x="0" y="1.40" width="34.3" height="0.9" fill="#0f7040"/><rect x="0" y="10.90" width="34.3" height="0.9" fill="#0f7040"/><rect x="0" y="20.40" width="34.3" height="0.9" fill="#0f7040"/><rect x="0" y="29.90" width="34.3" height="0.9" fill="#0f7040"/><rect x="0" y="39.40" width="34.3" height="0.9" fill="#0f7040"/><rect x="0" y="48.90" width="34.3" height="0.9" fill="#0f7040"/><rect x="0" y="58.40" width="34.3" height="0.9" fill="#0f7040"/><polyline points="0,63.3 3,62.3 12,62.3 14,63.3 34.3,63.3" fill="none" stroke="#40d84a" stroke-width="0.95"/></svg></div>
<div style="left:716.2px;top:46px;width:34.3px;height:65.4px;background:#000;border-right:1px solid #f1f0ec;border-bottom:1px solid #f1f0ec;overflow:hidden"><svg width="34.3" height="64.4" style="left:0;top:0"><rect x="2.90" y="0" width="0.9" height="64.4" fill="#0f7040"/><rect x="12.47" y="0" width="0.9" height="64.4" fill="#0f7040"/><rect x="22.04" y="0" width="0.9" height="64.4" fill="#0f7040"/><rect x="31.61" y="0" width="0.9" height="64.4" fill="#0f7040"/><rect x="0" y="1.40" width="34.3" height="0.9" fill="#0f7040"/><rect x="0" y="10.90" width="34.3" height="0.9" fill="#0f7040"/><rect x="0" y="20.40" width="34.3" height="0.9" fill="#0f7040"/><rect x="0" y="29.90" width="34.3" height="0.9" fill="#0f7040"/><rect x="0" y="39.40" width="34.3" height="0.9" fill="#0f7040"/><rect x="0" y="48.90" width="34.3" height="0.9" fill="#0f7040"/><rect x="0" y="58.40" width="34.3" height="0.9" fill="#0f7040"/><polyline points="0,63.3 34.3,63.3" fill="none" stroke="#40d84a" stroke-width="0.95"/></svg></div>
<div style="left:754.7px;top:46px;width:34.3px;height:65.4px;background:#000;border-right:1px solid #f1f0ec;border-bottom:1px solid #f1f0ec;overflow:hidden"><svg width="34.3" height="64.4" style="left:0;top:0"><rect x="2.90" y="0" width="0.9" height="64.4" fill="#0f7040"/><rect x="12.47" y="0" width="0.9" height="64.4" fill="#0f7040"/><rect x="22.04" y="0" width="0.9" height="64.4" fill="#0f7040"/><rect x="31.61" y="0" width="0.9" height="64.4" fill="#0f7040"/><rect x="0" y="1.40" width="34.3" height="0.9" fill="#0f7040"/><rect x="0" y="10.90" width="34.3" height="0.9" fill="#0f7040"/><rect x="0" y="20.40" width="34.3" height="0.9" fill="#0f7040"/><rect x="0" y="29.90" width="34.3" height="0.9" fill="#0f7040"/><rect x="0" y="39.40" width="34.3" height="0.9" fill="#0f7040"/><rect x="0" y="48.90" width="34.3" height="0.9" fill="#0f7040"/><rect x="0" y="58.40" width="34.3" height="0.9" fill="#0f7040"/><polyline points="0,63.3 34.3,63.3" fill="none" stroke="#40d84a" stroke-width="0.95"/></svg></div>
<div style="left:793.2px;top:46px;width:34.3px;height:65.4px;background:#000;border-right:1px solid #f1f0ec;border-bottom:1px solid #f1f0ec;overflow:hidden"><svg width="34.3" height="64.4" style="left:0;top:0"><rect x="2.90" y="0" width="0.9" height="64.4" fill="#0f7040"/><rect x="12.47" y="0" width="0.9" height="64.4" fill="#0f7040"/><rect x="22.04" y="0" width="0.9" height="64.4" fill="#0f7040"/><rect x="31.61" y="0" width="0.9" height="64.4" fill="#0f7040"/><rect x="0" y="1.40" width="34.3" height="0.9" fill="#0f7040"/><rect x="0" y="10.90" width="34.3" height="0.9" fill="#0f7040"/><rect x="0" y="20.40" width="34.3" height="0.9" fill="#0f7040"/><rect x="0" y="29.90" width="34.3" height="0.9" fill="#0f7040"/><rect x="0" y="39.40" width="34.3" height="0.9" fill="#0f7040"/><rect x="0" y="48.90" width="34.3" height="0.9" fill="#0f7040"/><rect x="0" y="58.40" width="34.3" height="0.9" fill="#0f7040"/><polyline points="0,63.3 12.3,63.3 13.2,33.6 15.7,1.6 26.9,1.6 28.2,25.3 31,62.6 34.3,63.3" fill="none" stroke="#40d84a" stroke-width="0.95"/></svg></div>
<div style="left:831.8px;top:46px;width:34.3px;height:65.4px;background:#000;border-right:1px solid #f1f0ec;border-bottom:1px solid #f1f0ec;overflow:hidden"><svg width="34.3" height="64.4" style="left:0;top:0"><rect x="2.90" y="0" width="0.9" height="64.4" fill="#0f7040"/><rect x="12.47" y="0" width="0.9" height="64.4" fill="#0f7040"/><rect x="22.04" y="0" width="0.9" height="64.4" fill="#0f7040"/><rect x="31.61" y="0" width="0.9" height="64.4" fill="#0f7040"/><rect x="0" y="1.40" width="34.3" height="0.9" fill="#0f7040"/><rect x="0" y="10.90" width="34.3" height="0.9" fill="#0f7040"/><rect x="0" y="20.40" width="34.3" height="0.9" fill="#0f7040"/><rect x="0" y="29.90" width="34.3" height="0.9" fill="#0f7040"/><rect x="0" y="39.40" width="34.3" height="0.9" fill="#0f7040"/><rect x="0" y="48.90" width="34.3" height="0.9" fill="#0f7040"/><rect x="0" y="58.40" width="34.3" height="0.9" fill="#0f7040"/><polyline points="0,63.3 6.6,63.3 8.3,55 9.6,61.5 10.8,60 12.9,21.2 14.2,50 14.9,63.3 34.3,63.3" fill="none" stroke="#40d84a" stroke-width="0.95"/></svg></div>
<div style="left:562px;top:137.6px;width:300px;height:64px;background:#000;border-right:1px solid #f1f0ec;border-bottom:1px solid #f1f0ec;overflow:hidden"><svg width="300" height="63" style="left:0;top:0"><rect x="6.50" y="0" width="0.9" height="63" fill="#0f7040"/><rect x="16.12" y="0" width="0.9" height="63" fill="#0f7040"/><rect x="25.74" y="0" width="0.9" height="63" fill="#0f7040"/><rect x="35.36" y="0" width="0.9" height="63" fill="#0f7040"/><rect x="44.98" y="0" width="0.9" height="63" fill="#0f7040"/><rect x="54.60" y="0" width="0.9" height="63" fill="#0f7040"/><rect x="64.22" y="0" width="0.9" height="63" fill="#0f7040"/><rect x="73.84" y="0" width="0.9" height="63" fill="#0f7040"/><rect x="83.46" y="0" width="0.9" height="63" fill="#0f7040"/><rect x="93.08" y="0" width="0.9" height="63" fill="#0f7040"/><rect x="102.70" y="0" width="0.9" height="63" fill="#0f7040"/><rect x="112.32" y="0" width="0.9" height="63" fill="#0f7040"/><rect x="121.94" y="0" width="0.9" height="63" fill="#0f7040"/><rect x="131.56" y="0" width="0.9" height="63" fill="#0f7040"/><rect x="141.18" y="0" width="0.9" height="63" fill="#0f7040"/><rect x="150.80" y="0" width="0.9" height="63" fill="#0f7040"/><rect x="160.42" y="0" width="0.9" height="63" fill="#0f7040"/><rect x="170.04" y="0" width="0.9" height="63" fill="#0f7040"/><rect x="179.66" y="0" width="0.9" height="63" fill="#0f7040"/><rect x="189.28" y="0" width="0.9" height="63" fill="#0f7040"/><rect x="198.90" y="0" width="0.9" height="63" fill="#0f7040"/><rect x="208.52" y="0" width="0.9" height="63" fill="#0f7040"/><rect x="218.14" y="0" width="0.9" height="63" fill="#0f7040"/><rect x="227.76" y="0" width="0.9" height="63" fill="#0f7040"/><rect x="237.38" y="0" width="0.9" height="63" fill="#0f7040"/><rect x="247.00" y="0" width="0.9" height="63" fill="#0f7040"/><rect x="256.62" y="0" width="0.9" height="63" fill="#0f7040"/><rect x="266.24" y="0" width="0.9" height="63" fill="#0f7040"/><rect x="275.86" y="0" width="0.9" height="63" fill="#0f7040"/><rect x="285.48" y="0" width="0.9" height="63" fill="#0f7040"/><rect x="295.10" y="0" width="0.9" height="63" fill="#0f7040"/><rect x="0" y="-0.20" width="300" height="0.9" fill="#0f7040"/><rect x="0" y="9.35" width="300" height="0.9" fill="#0f7040"/><rect x="0" y="18.90" width="300" height="0.9" fill="#0f7040"/><rect x="0" y="28.45" width="300" height="0.9" fill="#0f7040"/><rect x="0" y="38.00" width="300" height="0.9" fill="#0f7040"/><rect x="0" y="47.55" width="300" height="0.9" fill="#0f7040"/><rect x="0" y="57.10" width="300" height="0.9" fill="#0f7040"/><rect x="2.4" y="57.6" width="300" height="1.3" fill="#b2e65c"/></svg></div>
<div class="sunk" style="left:454.1px;top:340.2px;width:76.29999999999995px;height:13.6px;"></div>
<span class="t" style="top:341px;font-size:8.4px;line-height:12px;color:#000;left:455.5px;">Processes: 56</span>
<div class="sunk" style="left:533px;top:340.2px;width:93.39999999999998px;height:13.6px;"></div>
<span class="t" style="top:341px;font-size:8.4px;line-height:12px;color:#000;left:534.4px;">CPU Usage: 0%</span>
<div class="sunk" style="left:629.2px;top:340.2px;width:188.79999999999995px;height:13.6px;"></div>
<span class="t" style="top:341px;font-size:8.4px;line-height:12px;color:#000;left:630.6px;">Commit Charge: 1686M / 17822M</span>
<div class="sunk" style="left:821px;top:340.2px;width:49px;height:13.6px;"></div>
<!-- ===== Annotations ===== -->
<span class="t" style="top:298px;font-size:16px;line-height:19px;color:#161616;left:56.2px;">CPU usage when change is made</span>
<svg width="861" height="544" viewBox="0 0 861 544" style="left:0;top:0"><defs><marker id="ab" viewBox="0 0 10 10" refX="9" refY="5" markerWidth="12.5" markerHeight="10.4" markerUnits="userSpaceOnUse" orient="auto"><path d="M0,0.4 L10,5 L0,9.6 z" fill="#0a0a0a"/></marker><marker id="ar" viewBox="0 0 10 10" refX="9" refY="5" markerWidth="12" markerHeight="9.6" markerUnits="userSpaceOnUse" orient="auto"><path d="M0,0.4 L10,5 L0,9.6 z" fill="#e01414"/></marker></defs><line x1="151.6" y1="321" x2="122" y2="356.6" stroke="#0a0a0a" stroke-width="1.9" marker-end="url(#ab)"/><line x1="160.6" y1="322" x2="278.4" y2="357.4" stroke="#0a0a0a" stroke-width="1.9" marker-end="url(#ab)"/><line x1="303" y1="305.2" x2="798" y2="58.4" stroke="#e01414" stroke-width="1.9" marker-end="url(#ar)"/><rect x="787.1" y="37" width="42.8" height="75.4" rx="9.5" ry="9.5" fill="none" stroke="#d81818" stroke-width="2.3"/></svg>
</div></body></html>
